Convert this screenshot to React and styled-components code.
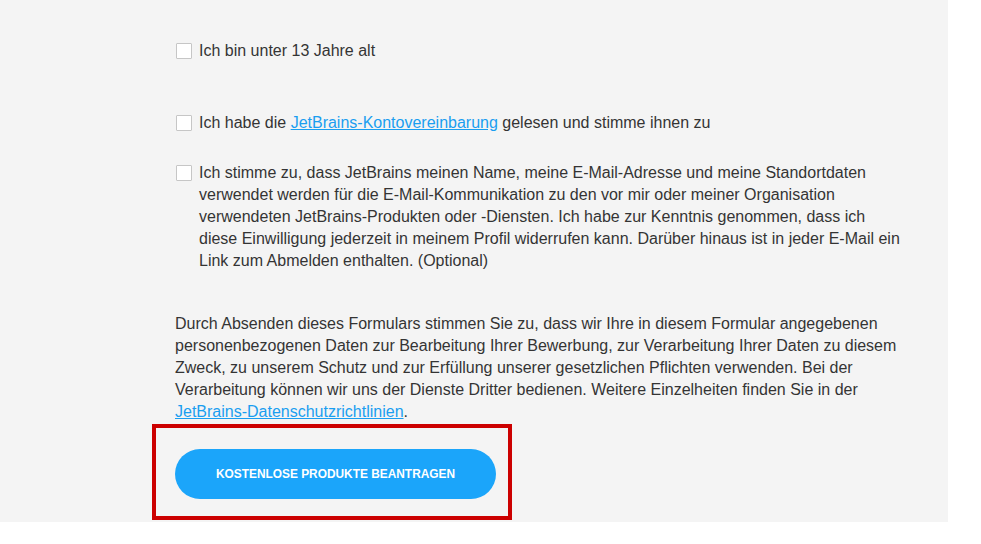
import React from "react";
import styled, { createGlobalStyle } from "styled-components";

const Global = createGlobalStyle`
  html, body { margin: 0; padding: 0; background: #ffffff; }
  body { font-family: "Liberation Sans", Arial, sans-serif; }
`;

const Panel = styled.div`
  width: 948px;
  height: 522px;
  box-sizing: border-box;
  background: #f4f4f4;
  padding: 40px 48px 22px 175px;
  display: flex;
  flex-direction: column;
  color: #343434;
  font-size: 16px;
  line-height: 22px;
`;

const CheckRow = styled.label`
  display: flex;
  align-items: flex-start;
  gap: 7px;
  margin-top: ${(p) => p.$gap || 0}px;
`;

const Box = styled.span`
  flex: 0 0 auto;
  width: 16px;
  height: 16px;
  box-sizing: border-box;
  margin: 3px 0 0 1px;
  background: #ffffff;
  border: 1px solid #c6c6c6;
  border-radius: 1px;
`;

const Label = styled.span`
  flex: 1;
`;

const Link = styled.a`
  color: #1a9ef0;
  text-decoration: underline;
  text-underline-offset: 1px;
`;

const Notice = styled.p`
  margin: 41px 0 0;
`;

const ButtonArea = styled.div`
  position: relative;
  align-self: flex-start;
  margin-top: 26px;
  &::after {
    content: "";
    position: absolute;
    top: -25px;
    left: -23px;
    right: -16px;
    bottom: -21px;
    border: 4px solid #cc0000;
    pointer-events: none;
  }
`;

const Button = styled.button`
  width: 321px;
  height: 50px;
  border: none;
  border-radius: 25px;
  background: #1ba5fa;
  color: #ffffff;
  font-family: "Liberation Sans", Arial, sans-serif;
  font-weight: 700;
  font-size: 11.9px;
  text-transform: uppercase;
  cursor: pointer;
  padding: 0;
`;

export default function App() {
  return (
    <>
      <Global />
      <Panel>
        <CheckRow>
          <Box />
          <Label>Ich bin unter 13 Jahre alt</Label>
        </CheckRow>
        <CheckRow $gap={50}>
          <Box />
          <Label>
            Ich habe die <Link href="#">JetBrains-Kontovereinbarung</Link> gelesen und stimme ihnen zu
          </Label>
        </CheckRow>
        <CheckRow $gap={28}>
          <Box />
          <Label>
            Ich stimme zu, dass JetBrains meinen Name, meine E-Mail-Adresse und meine Standortdaten
            verwendet werden für die E-Mail-Kommunikation zu den vor mir oder meiner Organisation
            verwendeten JetBrains-Produkten oder -Diensten. Ich habe zur Kenntnis genommen, dass ich
            diese Einwilligung jederzeit in meinem Profil widerrufen kann. Darüber hinaus ist in jeder
            E-Mail ein Link zum Abmelden enthalten. (Optional)
          </Label>
        </CheckRow>
        <Notice>
          Durch Absenden dieses Formulars stimmen Sie zu, dass wir Ihre in diesem Formular angegebenen
          personenbezogenen Daten zur Bearbeitung Ihrer Bewerbung, zur Verarbeitung Ihrer Daten zu
          diesem Zweck, zu unserem Schutz und zur Erfüllung unserer gesetzlichen Pflichten verwenden.
          Bei der Verarbeitung können wir uns der Dienste Dritter bedienen. Weitere Einzelheiten
          finden Sie in der <Link href="#">JetBrains-Datenschutzrichtlinien</Link>.
        </Notice>
        <ButtonArea>
          <Button>Kostenlose Produkte beantragen</Button>
        </ButtonArea>
      </Panel>
    </>
  );
}
